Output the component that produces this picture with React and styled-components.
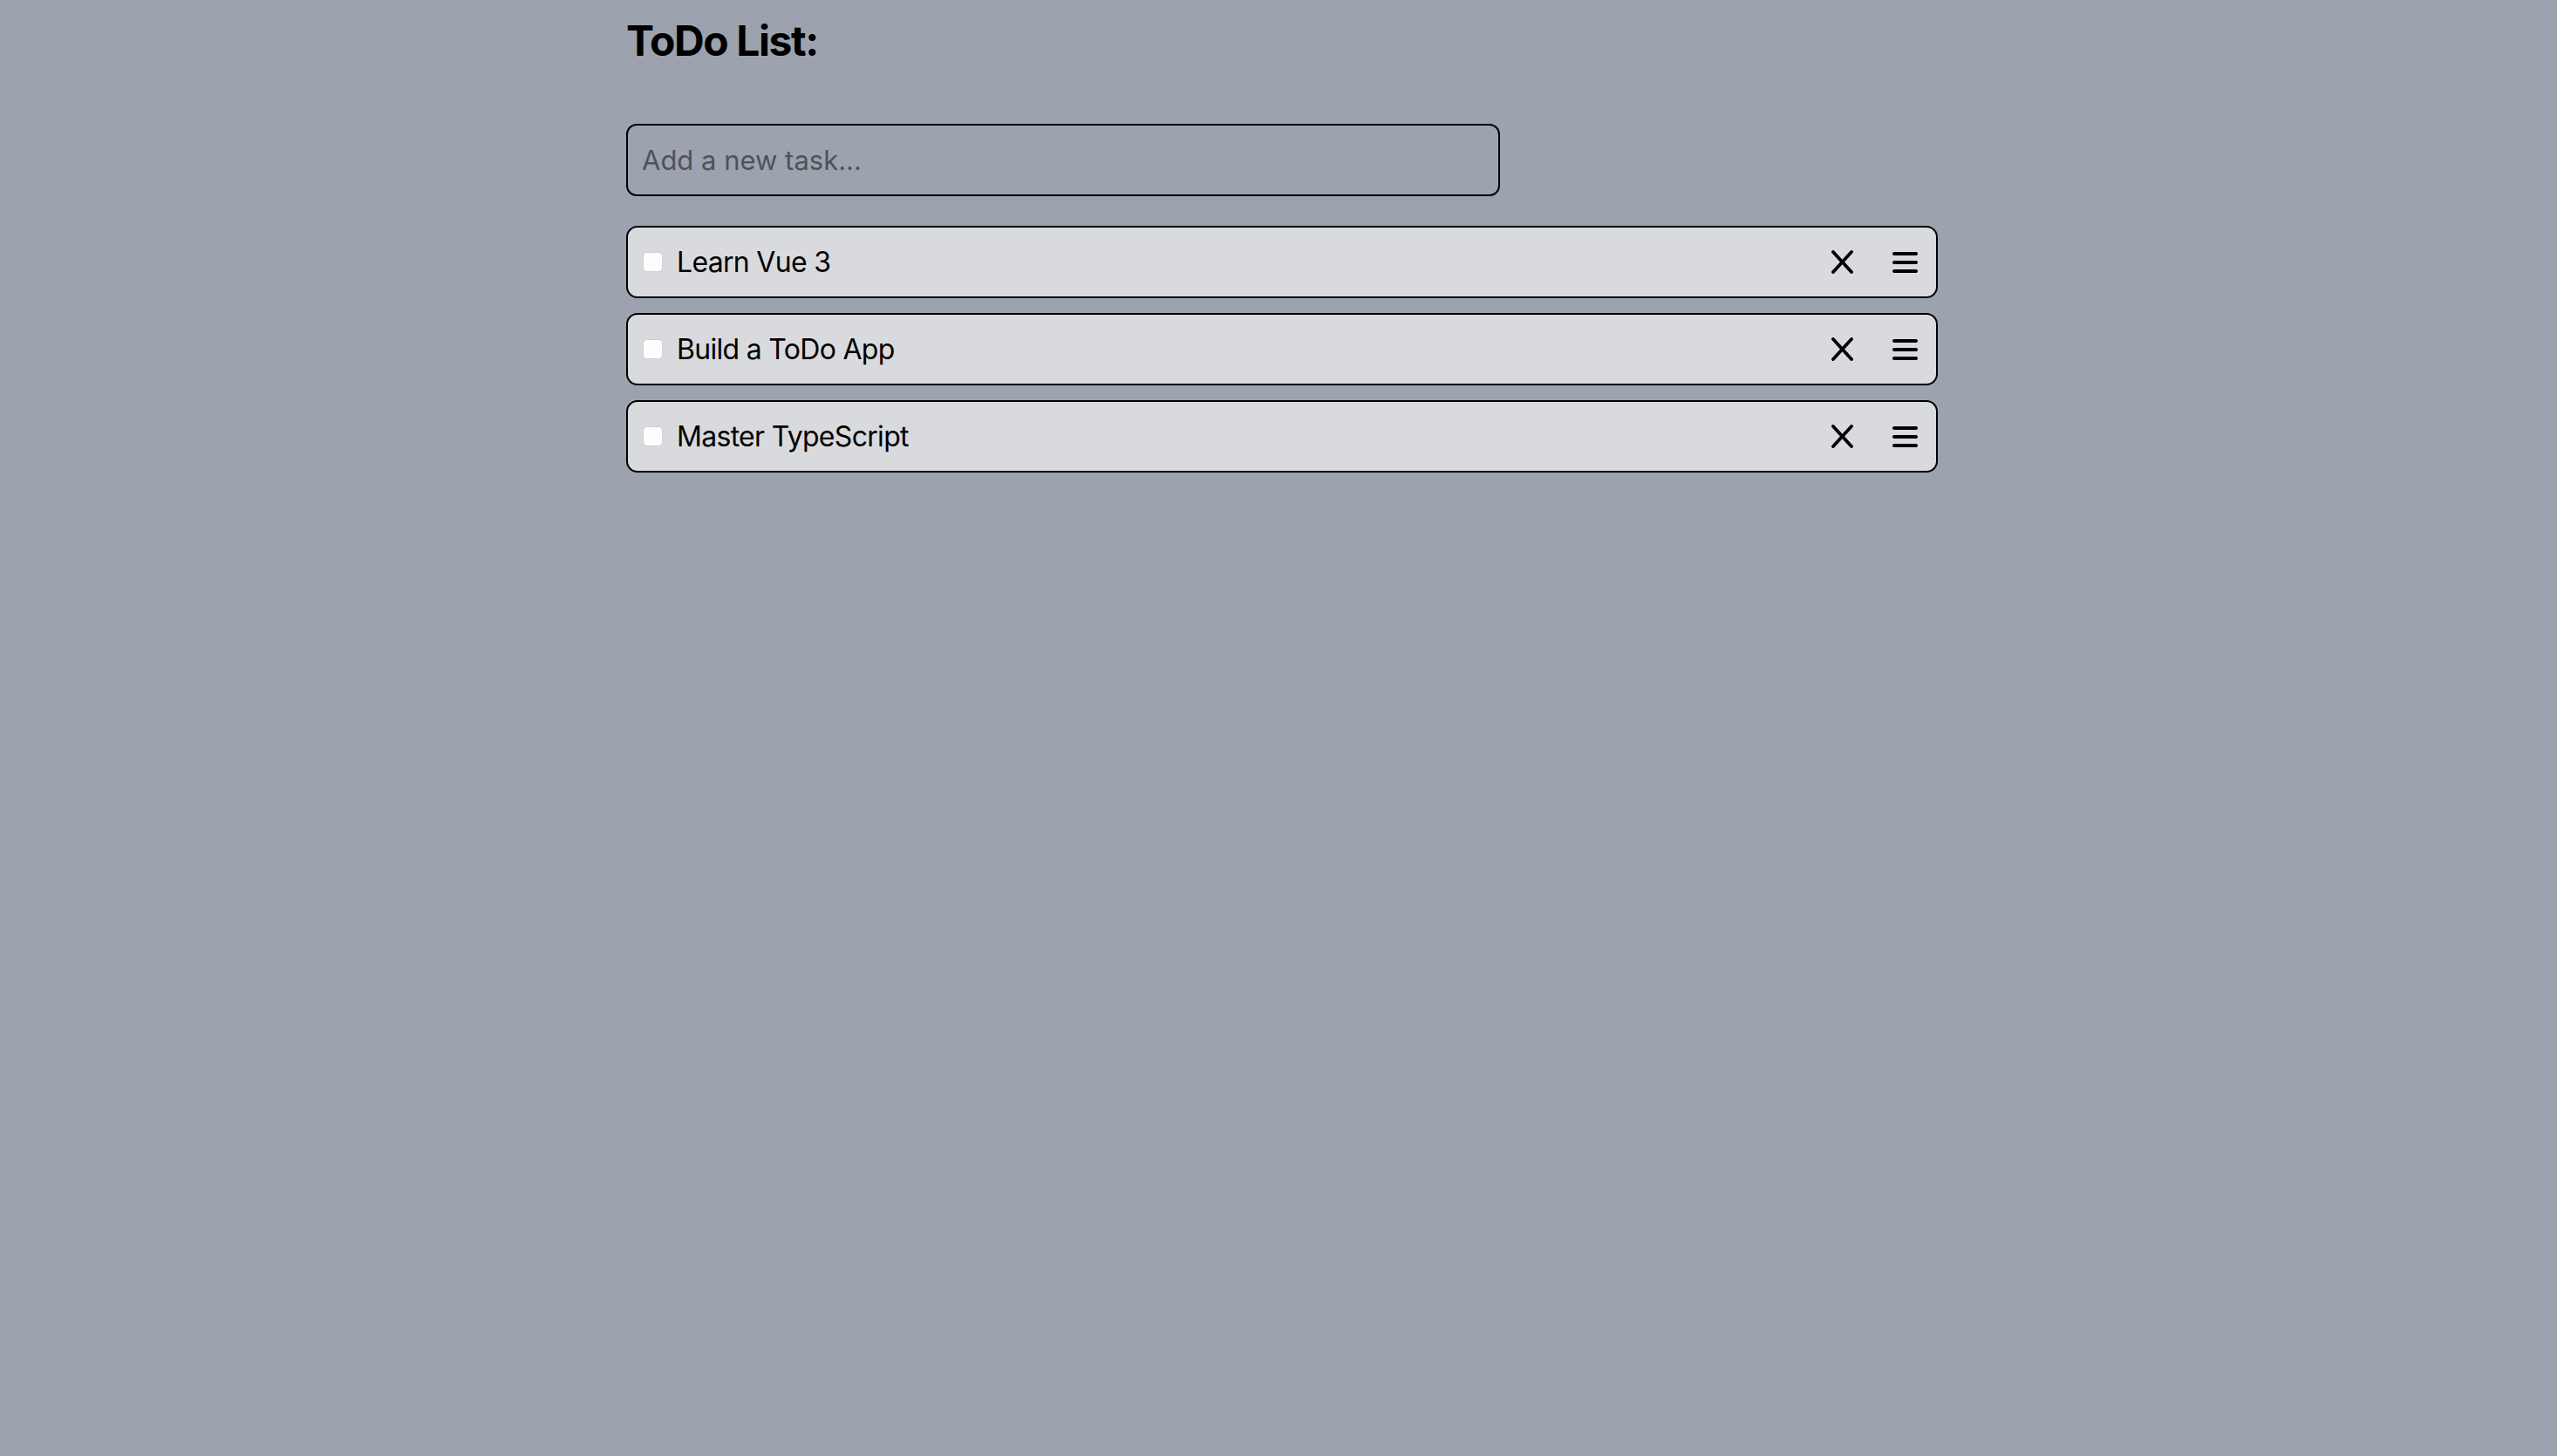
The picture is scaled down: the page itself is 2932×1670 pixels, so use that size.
import styled, { createGlobalStyle } from 'styled-components'
import { useState } from 'react'

const GlobalStyle = createGlobalStyle`
  html, body {
    margin: 0;
    padding: 0;
    background: #9ca3af;
    min-height: 100%;
  }
  body {
    font-family: Inter, "Liberation Sans", Arial, sans-serif;
    color: #000;
  }
`

const Page = styled.main`
  width: 1504px;
  margin: 0 auto;
  padding: 0 0 0 8px;
`

const Title = styled.h1`
  margin: 18px 0 0;
  font-size: 48px;
  font-weight: 700;
  letter-spacing: -1.4px;
  line-height: 58px;
`

const TaskInput = styled.input`
  display: block;
  box-sizing: border-box;
  width: 1002px;
  height: 83px;
  margin-top: 66px;
  padding: 0 16px;
  border: 2px solid #000;
  border-radius: 12px;
  background: transparent;
  font-family: inherit;
  font-size: 31px;
  color: #000;
  outline: none;

  &::placeholder {
    color: #4f5359;
  }
`

const List = styled.ul`
  list-style: none;
  margin: 34px 0 0;
  padding: 0;
  display: flex;
  flex-direction: column;
  gap: 17px;
`

const Item = styled.li`
  box-sizing: border-box;
  height: 83px;
  display: flex;
  align-items: center;
  padding: 0 21px 0 17px;
  border: 2px solid #000;
  border-radius: 13px;
  background: #d9dade;
`

const Check = styled.input`
  appearance: none;
  flex: none;
  width: 23px;
  height: 23px;
  margin: 0 16px 0 0;
  border: 1px solid #cfd0d3;
  border-radius: 5px;
  background: #fdfdfd;
`

const Label = styled.span`
  flex: 1;
  font-size: 32px;
  letter-spacing: -0.7px;
  text-decoration: ${p => (p.$done ? 'line-through' : 'none')};
`

const IconButton = styled.button`
  display: flex;
  align-items: center;
  justify-content: center;
  padding: 0;
  border: none;
  background: none;
  cursor: pointer;
  margin-left: ${p => p.$gap || 0}px;
`

const CloseIcon = () => (
  <svg width="25" height="27" viewBox="0 0 25 27" fill="none" stroke="#000" strokeWidth="3.8" strokeLinecap="round">
    <path d="M2 2 23 25" />
    <path d="M23 2 2 25" />
  </svg>
)

const MenuIcon = () => (
  <svg width="29" height="26" viewBox="0 0 29 26" fill="none" stroke="#000" strokeWidth="4" strokeLinecap="round">
    <path d="M2 3h25" />
    <path d="M2 13h25" />
    <path d="M2 23h25" />
  </svg>
)

function App() {
  const [tasks, setTasks] = useState([
    { id: 1, text: 'Learn Vue 3', done: false },
    { id: 2, text: 'Build a ToDo App', done: false },
    { id: 3, text: 'Master TypeScript', done: false },
  ])
  const [draft, setDraft] = useState('')

  const addTask = e => {
    if (e.key !== 'Enter' || !draft.trim()) return
    setTasks([...tasks, { id: Date.now(), text: draft.trim(), done: false }])
    setDraft('')
  }

  const toggle = id =>
    setTasks(tasks.map(t => (t.id === id ? { ...t, done: !t.done } : t)))

  const remove = id => setTasks(tasks.filter(t => t.id !== id))

  return (
    <Page>
      <GlobalStyle />
      <Title>ToDo List:</Title>
      <TaskInput
        placeholder="Add a new task..."
        value={draft}
        onChange={e => setDraft(e.target.value)}
        onKeyDown={addTask}
      />
      <List>
        {tasks.map(task => (
          <Item key={task.id}>
            <Check type="checkbox" checked={task.done} onChange={() => toggle(task.id)} />
            <Label $done={task.done}>{task.text}</Label>
            <IconButton onClick={() => remove(task.id)}>
              <CloseIcon />
            </IconButton>
            <IconButton $gap={45}>
              <MenuIcon />
            </IconButton>
          </Item>
        ))}
      </List>
    </Page>
  )
}

export default App
